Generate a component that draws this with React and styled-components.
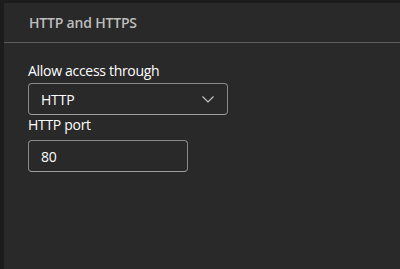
import React, { useState } from 'react'
import styled, { createGlobalStyle } from 'styled-components'

const GlobalStyle = createGlobalStyle`
  html, body {
    margin: 0;
    padding: 0;
    background: #1c1c1c;
    height: 100%;
  }
  #root {
    height: 100%;
  }
`

const Shell = styled.div`
  height: 100%;
  padding: 3px 0 0 4px;
  box-sizing: border-box;
  display: flex;
  font-family: "Segoe UI", "Open Sans", "Noto Sans", sans-serif;
`

const Panel = styled.section`
  flex: 1;
  background: #292929;
  display: flex;
  flex-direction: column;
`

const Header = styled.header`
  height: 39px;
  border-bottom: 1px solid #5c5c5c;
  display: flex;
  align-items: center;
  padding-left: 25px;
`

const Title = styled.h3`
  margin: 0;
  font-size: 14px;
  font-weight: 600;
  letter-spacing: -0.2px;
  color: #bdbdbd;
`

const Body = styled.div`
  padding: 18px 24px 0;
  display: flex;
  flex-direction: column;
  align-items: flex-start;
`

const Label = styled.label`
  font-size: 14px;
  line-height: 20px;
  letter-spacing: -0.3px;
  color: #ffffff;
  margin-bottom: ${props => props.gap || 2}px;
`

const Field = styled.div`
  box-sizing: border-box;
  width: ${props => props.width}px;
  height: 32px;
  border: 1px solid #8a8a8a;
  border-bottom-color: #9e9e9e;
  border-radius: 4px;
  display: flex;
  align-items: center;
  justify-content: space-between;
  padding: 0 12px;
  font-size: 14px;
  letter-spacing: -0.2px;
  color: #ffffff;
`

const Chevron = styled.svg`
  width: 14px;
  height: 14px;
`

export default function App() {
  const [mode] = useState('HTTP')
  const [port] = useState('80')

  return (
    <>
      <GlobalStyle />
      <Shell>
        <Panel>
          <Header>
            <Title>HTTP and HTTPS</Title>
          </Header>
          <Body>
            <Label>Allow access through</Label>
            <Field width={200}>
              <span>{mode}</span>
              <Chevron viewBox="0 0 14 14" fill="none">
                <path d="M1.5 4.5 L7 10 L12.5 4.5" stroke="#c8c8c8" strokeWidth="1.1" />
              </Chevron>
            </Field>
            <Label gap={5}>HTTP port</Label>
            <Field width={160}>
              <span>{port}</span>
            </Field>
          </Body>
        </Panel>
      </Shell>
    </>
  )
}
